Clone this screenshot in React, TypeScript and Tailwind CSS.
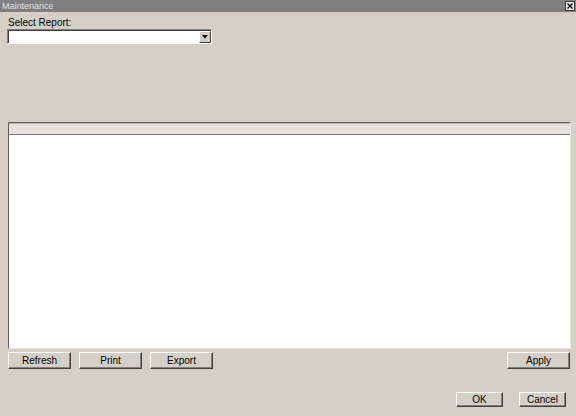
import React from 'react';

const Btn: React.FC<{ label: string; w: string }> = ({ label, w }) => (
  <button
    className={`${w} h-full bg-[#d4d0c8] border border-t-white border-l-white border-r-[#404040] border-b-[#404040] shadow-[inset_-1px_-1px_0_#808080] text-[10px] leading-none text-black`}
  >
    {label}
  </button>
);

export default function App() {
  return (
    <div className="w-[576px] h-[416px] bg-[#d4d0c8] flex flex-col font-['Liberation_Sans',Arial,sans-serif] overflow-hidden">
      {/* title bar */}
      <div className="h-[12px] bg-[#7f7f7f] flex items-center justify-between pl-[2px] pr-[1px]">
        <span className="text-[9px] leading-none text-[#e0e0e0]">Maintenance</span>
        <div className="w-[10px] h-[10px] bg-[#e8e8e8] border border-[#404040] flex items-center justify-center">
          <svg width="6" height="6" viewBox="0 0 6 6">
            <path d="M0.5 0.5 L5.5 5.5 M5.5 0.5 L0.5 5.5" stroke="#000" strokeWidth="1.4" />
          </svg>
        </div>
      </div>

      <div className="pl-[8px] mt-[5px] text-[10px] leading-[12px] text-black">Select Report:</div>

      {/* dropdown */}
      <div className="ml-[7px] w-[205px] h-[15px] bg-white border border-t-[#808080] border-l-[#808080] border-r-white border-b-white shadow-[inset_1px_1px_0_#404040] flex justify-end p-[1px] pr-0 pb-0">
        <div className="w-[12px] h-full bg-[#d4d0c8] border border-t-white border-l-white border-r-[#404040] border-b-[#404040] flex items-center justify-center">
          <svg width="6" height="4" viewBox="0 0 6 4">
            <path d="M0 0 H6 L3 3.5 Z" fill="#000" />
          </svg>
        </div>
      </div>

      {/* grid */}
      <div className="ml-[8px] mt-[78px] w-[563px] h-[227px] border border-t-[#606060] border-l-[#606060] border-r-[#e8e8e8] border-b-[#e8e8e8] flex flex-col bg-white">
        <div className="h-[12px] bg-[#e4e2da] border-t border-t-[#b8b6ae] border-b border-b-[#7a7a7a]" />
        <div className="flex-1 bg-white" />
      </div>

      {/* action row */}
      <div className="h-[17px] mt-[3px] flex pl-[8px] pr-[6px]">
        <div className="flex gap-[8px] h-full">
          <Btn label="Refresh" w="w-[63px]" />
          <Btn label="Print" w="w-[63px]" />
          <Btn label="Export" w="w-[63px]" />
        </div>
        <div className="flex-1" />
        <Btn label="Apply" w="w-[63px]" />
      </div>

      {/* dialog buttons */}
      <div className="h-[15px] mt-[23px] flex justify-end gap-[16px] pr-[10px]">
        <Btn label="OK" w="w-[47px]" />
        <Btn label="Cancel" w="w-[47px]" />
      </div>
    </div>
  );
}
